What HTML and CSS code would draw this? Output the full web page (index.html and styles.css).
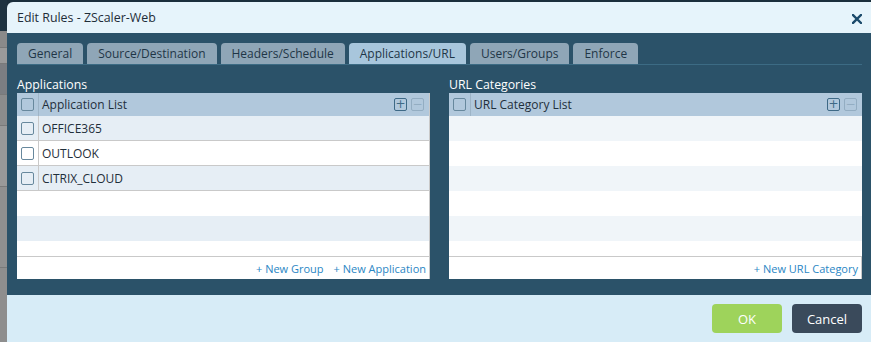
FILE: index.html
```html
<!DOCTYPE html>
<html lang="en">
<head>
    <meta charset="UTF-8">
    <title>Edit Rules - ZScaler-Web</title>
    <link rel="stylesheet" href="styles.css">
</head>
<body>
    <div class="screen">
        <div class="behind">
            <div class="b-top"></div>
            <div class="b-row b1"></div>
            <div class="b-row b2"></div>
            <div class="b-row b3"></div>
            <div class="b-row b4"></div>
            <div class="b-row b5"></div>
            <div class="b-row b6"></div>
        </div>
        <div class="dialog">
            <div class="dlg-head">
                <span class="dlg-title">Edit Rules - ZScaler-Web</span>
                <svg class="dlg-close" width="10" height="10" viewBox="0 0 10 10">
                    <path d="M1 1 L9 9 M9 1 L1 9" stroke="#1b4a6b" stroke-width="2.4" stroke-linecap="square"/>
                </svg>
            </div>
            <div class="dlg-body">
                <div class="tabs">
                    <div class="tab">General</div>
                    <div class="tab">Source/Destination</div>
                    <div class="tab">Headers/Schedule</div>
                    <div class="tab active">Applications/URL</div>
                    <div class="tab">Users/Groups</div>
                    <div class="tab">Enforce</div>
                </div>
                <div class="columns">
                    <div class="col">
                        <div class="col-label">Applications</div>
                        <div class="grid edged">
                            <div class="grid-head">
                                <div class="cell-check"><span class="cbox"></span></div>
                                <div class="cell-name">Application List</div>
                                <div class="tools">
                                    <span class="tool plus">+</span>
                                    <span class="tool minus">&minus;</span>
                                </div>
                            </div>
                            <div class="grid-rows">
                                <div class="row alt item">
                                    <div class="cell-check"><span class="cbox"></span></div>
                                    <div class="cell-name">OFFICE365</div>
                                </div>
                                <div class="row item">
                                    <div class="cell-check"><span class="cbox"></span></div>
                                    <div class="cell-name">OUTLOOK</div>
                                </div>
                                <div class="row alt item">
                                    <div class="cell-check"><span class="cbox"></span></div>
                                    <div class="cell-name">CITRIX_CLOUD</div>
                                </div>
                                <div class="row"></div>
                                <div class="row alt"></div>
                                <div class="row short"></div>
                            </div>
                            <div class="grid-foot">
                                <a class="link">+ New Group</a>
                                <a class="link">+ New Application</a>
                            </div>
                        </div>
                    </div>
                    <div class="col">
                        <div class="col-label">URL Categories</div>
                        <div class="grid">
                            <div class="grid-head">
                                <div class="cell-check"><span class="cbox"></span></div>
                                <div class="cell-name">URL Category List</div>
                                <div class="tools">
                                    <span class="tool plus">+</span>
                                    <span class="tool minus">&minus;</span>
                                </div>
                            </div>
                            <div class="grid-rows light">
                                <div class="row alt"></div>
                                <div class="row"></div>
                                <div class="row alt"></div>
                                <div class="row"></div>
                                <div class="row alt"></div>
                                <div class="row short"></div>
                            </div>
                            <div class="grid-foot boxed">
                                <a class="link">+ New URL Category</a>
                            </div>
                        </div>
                    </div>
                </div>
            </div>
            <div class="dlg-foot">
                <button class="btn ok">OK</button>
                <button class="btn cancel">Cancel</button>
            </div>
        </div>
    </div>
</body>
</html>
```

FILE: styles.css
```css
body {
    margin: 0;
    overflow: hidden;
    font-family: 'Open Sans', 'Noto Sans', sans-serif;
    background: #1b2f3c;
}

.screen {
    display: flex;
    height: 342px;
}

/* greyed page behind the modal */
.behind {
    width: 7px;
    display: flex;
    flex-direction: column;
    background: #8e8e8e;
}

.b-top {
    height: 31px;
    background: #1e3341;
}

.b-row {
    border-bottom: 1px solid #7a7a7a;
}

.b1 { height: 16px; background: #8a8a8a; }
.b2 { height: 15px; background: #9a9a9a; }
.b3 { height: 30px; background: #7c7e82; }
.b4 { height: 30px; background: #8c8c8c; }
.b5 { height: 60px; background: #999; }
.b6 { height: 80px; background: #909090; }

.dialog {
    flex: 1;
    margin-top: 2px;
    display: flex;
    flex-direction: column;
    border-top-left-radius: 6px;
    overflow: hidden;
}

.dlg-head {
    height: 31px;
    background: #e6f4fb;
    display: flex;
    align-items: center;
    justify-content: space-between;
    padding: 0 9px 0 10px;
}

.dlg-title {
    font-size: 12.4px;
    color: #1e2d38;
}

.dlg-close {
    margin-top: 3px;
}

.dlg-body {
    background: #2b5269;
    padding: 10px 9px 16px 10px;
}

.tabs {
    display: flex;
    gap: 4px;
    border-bottom: 1px solid #3c6b84;
}

.tab {
    height: 21px;
    line-height: 21px;
    padding: 0 11px;
    font-size: 12px;
    color: #1f3647;
    background: #8fa6b7;
    border-radius: 4px 4px 0 0;
}

.tab.active {
    background: #a8c6dc;
}

.columns {
    display: flex;
    gap: 19px;
}

.col {
    flex: 1;
}

.col-label {
    color: #ffffff;
    font-size: 12.3px;
    height: 28px;
    line-height: 16px;
    padding-top: 12px;
    box-sizing: border-box;
}

.grid {
    height: 186px;
    background: #ffffff;
    display: flex;
    flex-direction: column;
    box-sizing: border-box;
}

.grid.edged {
    border-right: 1px solid #c9c9c9;
}

.grid-head {
    height: 23px;
    flex-shrink: 0;
    background: #b1c8dc;
    display: flex;
    align-items: center;
    font-size: 12px;
    color: #1f2f3b;
}

.cell-check {
    width: 21px;
    align-self: stretch;
    display: flex;
    align-items: center;
    justify-content: center;
    border-right: 1px solid #c9c9c9;
}

.grid-head .cell-check {
    border-right-color: #9db4c7;
}

.cbox {
    width: 11px;
    height: 11px;
    border: 1px solid #67889d;
    border-radius: 2px;
    background: transparent;
}

.cell-name {
    padding-left: 3px;
    flex: 1;
}

.tools {
    display: flex;
    gap: 4px;
    padding-right: 5px;
}

.tool {
    width: 11px;
    height: 11px;
    border: 1px solid #3e6986;
    border-radius: 2px;
    font-size: 12px;
    line-height: 10px;
    text-align: center;
    color: #3e6986;
    font-family: 'DejaVu Sans', sans-serif;
}

.tool.minus {
    border-color: #93adc2;
    color: #93adc2;
}

.grid-rows {
    flex: 1;
}

.row {
    height: 25px;
    box-sizing: border-box;
    display: flex;
    font-size: 12px;
    color: #1f2f3b;
    align-items: stretch;
}

.row.item {
    border-bottom: 1px solid #c9c9c9;
}

.row.item .cell-name {
    display: flex;
    align-items: center;
    padding-top: 1px;
}

.row.alt {
    background: #e6eef5;
}

.grid-rows.light .row.alt {
    background: #f0f5f9;
}

.row.short {
    height: 15px;
}

.grid-foot {
    height: 23px;
    box-sizing: border-box;
    flex-shrink: 0;
    border-top: 1px solid #c9c9c9;
    display: flex;
    justify-content: flex-end;
    align-items: center;
    gap: 10px;
    padding-right: 3px;
}

.grid-foot.boxed {
    border-right: 1px solid #c9c9c9;
}

.link {
    font-size: 11px;
    color: #2a86c4;
}

.dlg-foot {
    flex: 1;
    background: #d7ecf7;
    display: flex;
    justify-content: flex-end;
    align-items: flex-start;
    padding: 9px 9px 0 0;
    gap: 10px;
}

.btn {
    width: 70px;
    height: 29px;
    border: none;
    border-radius: 4px;
    font-family: 'Open Sans', 'Noto Sans', sans-serif;
    font-size: 13px;
    color: #ffffff;
}

.btn.ok {
    background: #9ed35b;
}

.btn.cancel {
    background: #3a4a5b;
}
```
